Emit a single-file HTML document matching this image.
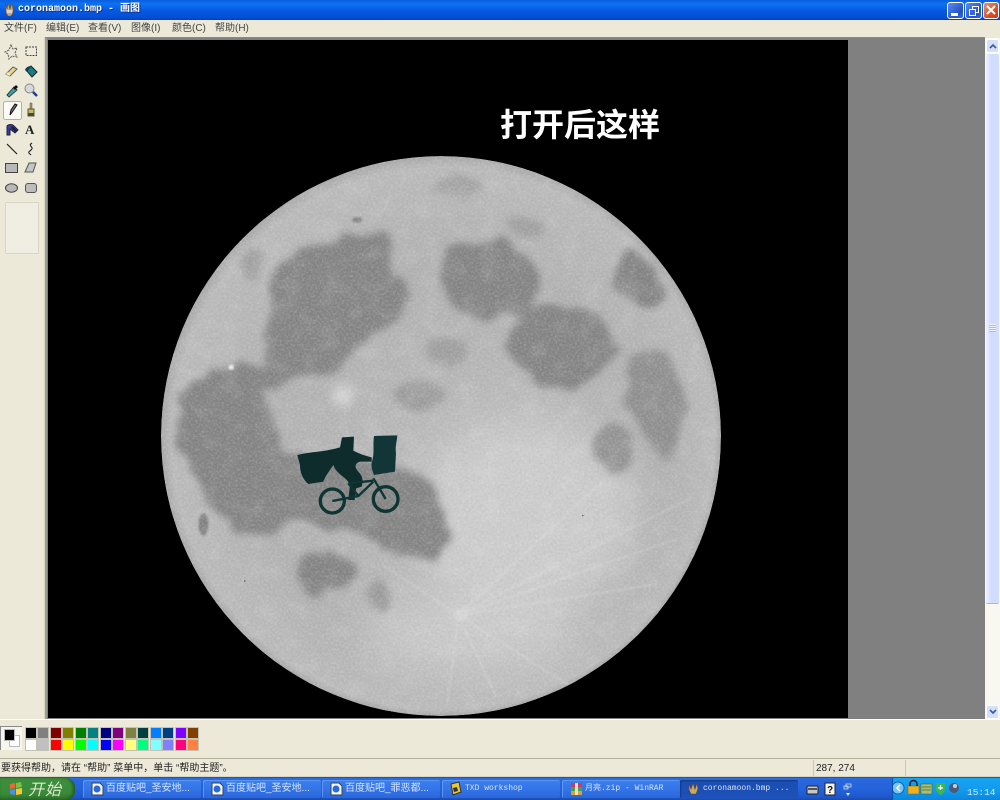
<!DOCTYPE html>
<html lang="zh">
<head>
<meta charset="utf-8">
<title>coronamoon.bmp - 画图</title>
<style>
html,body{margin:0;padding:0;width:1000px;height:800px;overflow:hidden;background:#ece9d8}
body{position:relative;font-family:"Liberation Sans","Noto Sans CJK SC",sans-serif;color:#222}
.a{position:absolute}
#title{left:0;top:0;width:1000px;height:20px;background:linear-gradient(#0a5fe0 0,#0d72f2 20%,#0658e0 55%,#0450d8 85%,#0342b8 100%)}
#title span{position:absolute;left:18px;top:3px;color:#fff;font:bold 10px/14px "Liberation Mono","Noto Sans CJK SC",monospace;white-space:pre;text-shadow:1px 1px 0 #0a2f90}
.wb{position:absolute;top:2px;width:16px;height:15px;border:1px solid #fff;border-radius:3px;background:linear-gradient(135deg,#5c8cf0,#2350c8 70%,#3a6ae0)}
#menu{left:0;top:20px;width:1000px;height:17px;background:#ece9d8}
#menu span{position:absolute;top:2px;font-size:10px;line-height:13px;white-space:nowrap;color:#444}
#tools{left:0;top:37px;width:44px;height:682px;background:#ece9d8;border-right:1px solid #d8d4c0}
#work{left:45px;top:37px;width:940px;height:682px;background:#808080;border-top:1px solid #8a8a8a}
#work:before{content:"";position:absolute;left:0;top:0;width:2px;height:682px;background:#9c9c98}
#canvas{left:48px;top:40px;width:800px;height:678px;background:#000}
#head{left:500px;top:103px;color:#fff;font:bold 32px/40px "Noto Sans CJK SC","Liberation Sans",sans-serif;letter-spacing:0;white-space:nowrap}
#sb{left:985px;top:38px;width:15px;height:681px;background:#f8f7f0}
#thumb{position:absolute;left:1px;top:16px;width:13px;height:549px;background:linear-gradient(90deg,#eef2ff,#cfdcfc 40%,#d2defc);border-radius:2px;border-bottom:1px solid #a8b8dc}
.sbtn{position:absolute;left:1px;width:13px;height:14px;background:#d4e0fa;border-radius:2px;border:1px solid #fff;box-sizing:border-box}
#white{left:0;top:719px;width:1000px;height:1px;background:#fff}
#pal{left:0;top:720px;width:1000px;height:38px;background:#ece9d8}
#pal i{position:absolute;width:10px;height:10px;border:1px solid #c4c2b4;display:block}
#status{left:0;top:758px;width:1000px;height:19px;background:#ece9d8;border-top:1px solid #b5b29e;border-bottom:1px solid #d8d5c4;box-sizing:border-box}
#status span{position:absolute;top:3px;font-size:10px;line-height:13px;white-space:nowrap;color:#222}
#status b{position:absolute;top:1px;width:1px;height:16px;background:#c8c5b2}
#task{left:0;top:777px;width:1000px;height:23px;background:linear-gradient(#2b6fe4 0,#2a66dc 12%,#2463dc 50%,#1f57c8 88%,#1a49a8 100%);border-top:1px solid #1a52c8;box-sizing:border-box}
#start{left:0;top:778px;width:75px;height:22px;background:linear-gradient(#4a9a4a,#3b8f3b 15%,#3a8a3a 70%,#2c702c);border-radius:0 9px 9px 0;box-shadow:inset -2px 0 3px #1f5a1f}
#start span{position:absolute;left:28px;top:0;color:#dfe8d0;font:italic 16px/21px "Noto Sans CJK SC",sans-serif;letter-spacing:1px}
.tb{position:absolute;top:780px;width:118px;height:18px;background:linear-gradient(#3c80ee,#3272e6 60%,#2a66d8);border-radius:2px;color:#d6e4fb;font-size:10px;line-height:17px;white-space:nowrap;box-shadow:inset 1px 1px 0 #5c96f4}
.tb span{position:absolute;left:23px;top:0}
.tb .m{font-family:"Liberation Mono","Noto Sans CJK SC",monospace;font-size:8px}
.tb svg{position:absolute;left:7px;top:1px}
.tb.on{background:linear-gradient(#1a4cb0,#1e52b8);box-shadow:inset 1px 1px 1px #123a88}
#tray{left:892px;top:778px;width:108px;height:22px;background:linear-gradient(#18a4f0,#109aec 60%,#0c86dc);border-left:1px solid #0d50a8;box-sizing:border-box}
</style>
</head>
<body>

<div class="a" id="title">
  <svg class="a" style="left:3px;top:2px" width="13" height="15" viewBox="0 0 13 15"><path d="M2 1l2 6 1-6 2 6 2-6 1 6 1-4-1 8-2 3H5L3 11z" fill="#c9a868" stroke="#6a4a30" stroke-width=".6"/><path d="M4 8h5v3H4z" fill="#d8d0e8"/></svg>
  <span>coronamoon.bmp - 画图</span>
  <div class="wb" style="left:947px;width:15px"><div class="a" style="left:3px;top:10px;width:7px;height:3px;background:#fff"></div></div>
  <div class="wb" style="left:965px;width:15px"><div class="a" style="left:6px;top:3px;width:5px;height:5px;border:1px solid #fff"></div><div class="a" style="left:3px;top:6px;width:5px;height:5px;border:1px solid #fff;background:#3a64d8"></div></div>
  <div class="wb" style="left:983px;width:14px;background:linear-gradient(135deg,#e89070,#d24a24 70%,#c83c18)">
    <svg class="a" style="left:2px;top:2px" width="10" height="10" viewBox="0 0 10 10"><path d="M1 1l8 8M9 1L1 9" stroke="#fff" stroke-width="2"/></svg>
  </div>
</div>

<div class="a" id="menu">
  <span style="left:4px">文件(F)</span>
  <span style="left:46px">编辑(E)</span>
  <span style="left:88px">查看(V)</span>
  <span style="left:131px">图像(I)</span>
  <span style="left:172px">颜色(C)</span>
  <span style="left:215px">帮助(H)</span>
</div>

<div class="a" id="tools">
<svg class="a" style="left:0;top:0" width="44" height="225" viewBox="0 37 44 225">
  <path d="M11 45l2 4 4-1-2 5 2 4-5-1-3 3-1-5-3-2 4-2z" fill="none" stroke="#555" stroke-width="1" stroke-dasharray="2 1"/>
  <rect x="26" y="47" width="10.500" height="8.500" fill="none" stroke="#444" stroke-width="1" stroke-dasharray="2 1"/>
  <path d="M6 74l7-7 4 2-7 7z" fill="#e8d48a" stroke="#666"/><path d="M6 74l4 2v-1l-2-3z" fill="#f6efcf"/>
  <path d="M26 70l5-4 6 6-5 5z" fill="#1c7c7c" stroke="#123"/><path d="M25 70c1-3 4-4 6-4l-4 6z" fill="#123c50"/>
  <path d="M7 95l7-8 3 3-8 7z" fill="#4aa0a8" stroke="#244"/><path d="M13 88l3-3 2 2-3 3z" fill="#111"/>
  <circle cx="29.500" cy="88.500" r="4.500" fill="#d6d8dc" stroke="#888"/><path d="M33 92l4 4" stroke="#223a90" stroke-width="2.500"/>
  <rect x="3.500" y="101.500" width="18" height="18" rx="2" fill="#fbfaf5" stroke="#b4b2a4"/>
  <path d="M10 115l1-5 4-6 2 1-4 6z" fill="#777" stroke="#111"/>
  <path d="M30 103h2v6h-2z" fill="#a89a50" stroke="#555" stroke-width=".5"/><path d="M28 109h6v7h-6z" fill="#c9b860" stroke="#554"/><path d="M28 113h6v3h-6z" fill="#4a4a30"/>
  <path d="M7 126c2-2 5-2 7 0l4 4-3 3-5-4v6H7z" fill="#3a3aa0" stroke="#223"/><path d="M12 126l5 4-2 2-4-4z" fill="#1c1c50"/>
  <text x="25" y="134" font-family="Liberation Serif,serif" font-weight="bold" font-size="13" fill="#222">A</text>
  <path d="M7 144l10 10" stroke="#222" stroke-width="1.200"/>
  <path d="M32 143c-5 3 3 4-1 7s-2 3 0 5" fill="none" stroke="#222" stroke-width="1.100"/>
  <rect x="5.500" y="163.500" width="12" height="9" fill="#b8b8b8" stroke="#444"/>
  <path d="M29 163h7l-3 9h-8z" fill="#c4c4c4" stroke="#555"/>
  <ellipse cx="11.500" cy="188" rx="6" ry="4.200" fill="#b8b8b8" stroke="#444"/>
  <rect x="25.500" y="183.500" width="11" height="9" rx="2.500" fill="#bcbcbc" stroke="#555"/>
  <rect x="5.500" y="202.500" width="33" height="51" fill="#f0eee2" stroke="#d8d5c4"/>
</svg>
</div>

<div class="a" id="work"></div>
<div class="a" id="canvas"></div>

<svg class="a" style="left:48px;top:40px" width="800" height="678" viewBox="48 40 800 678">
  <defs>
    <clipPath id="mc"><circle cx="441" cy="436" r="280"/></clipPath>
    <radialGradient id="base" cx="441" cy="436" r="280" gradientUnits="userSpaceOnUse" fx="500" fy="520">
      <stop offset="0" stop-color="#bcbcbc"/>
      <stop offset=".7" stop-color="#b0b0b0"/>
      <stop offset=".97" stop-color="#bababa"/>
      <stop offset="1" stop-color="#a8a8a8"/>
    </radialGradient>
    <filter id="mare" x="-10%" y="-10%" width="120%" height="120%">
      <feTurbulence type="fractalNoise" baseFrequency=".012" numOctaves="4" seed="5" result="t"/>
      <feDisplacementMap in="SourceGraphic" in2="t" scale="60" xChannelSelector="R" yChannelSelector="G"/>
      <feGaussianBlur stdDeviation="10"/>
    </filter>
    <filter id="bl" x="-30%" y="-30%" width="160%" height="160%"><feGaussianBlur stdDeviation="14"/></filter>
    <filter id="bl2" x="-40%" y="-40%" width="180%" height="180%"><feGaussianBlur stdDeviation="60"/></filter>
    <filter id="ray" x="-10%" y="-10%" width="120%" height="120%"><feGaussianBlur stdDeviation="3"/></filter>
    <filter id="noise" x="0" y="0" width="100%" height="100%">
      <feTurbulence type="fractalNoise" baseFrequency=".45" numOctaves="3" seed="7"/>
      <feColorMatrix values="0 0 0 0 1  0 0 0 0 1  0 0 0 0 1  1.800 0 0 0 -.72"/>
    </filter>
    <filter id="noise2" x="0" y="0" width="100%" height="100%">
      <feTurbulence type="fractalNoise" baseFrequency=".35" numOctaves="3" seed="21"/>
      <feColorMatrix values="0 0 0 0 .35  0 0 0 0 .35  0 0 0 0 .35  0 1.800 0 0 -.76"/>
    </filter>
    <filter id="noise3" x="0" y="0" width="100%" height="100%">
      <feTurbulence type="fractalNoise" baseFrequency=".05" numOctaves="3" seed="11"/>
      <feColorMatrix values="0 0 0 0 .9  0 0 0 0 .9  0 0 0 0 .9  2.500 0 0 0 -1.150"/>
    </filter>
  </defs>
  <g clip-path="url(#mc)">
    <circle cx="441" cy="436" r="280" fill="url(#base)"/>
    <g transform="translate(150 140) scale(.3763)">
      <g filter="url(#bl2)" fill="#d0d0d0" opacity=".8">
        <ellipse cx="1000" cy="1000" rx="300" ry="260"/>
        <ellipse cx="850" cy="1320" rx="300" ry="110"/>
      </g>
      <g filter="url(#mare)" fill="#828282">
        <path d="M340 340C400 280 520 230 620 260C650 300 640 360 680 380C700 440 660 480 620 510C560 540 520 590 480 620C420 640 380 640 330 660C290 660 280 590 300 540C300 470 320 400 340 340Z"/>
        <path d="M780 290C830 260 920 250 970 290C1020 330 1040 380 1030 430C1000 470 1000 470 990 480C920 480 840 470 810 450C790 420 770 360 780 290Z"/>
        <path d="M960 500C1020 450 1100 420 1180 450C1240 490 1250 540 1240 590C1200 620 1180 610 1160 640C1120 660 1050 670 1020 640C980 600 950 550 960 500Z"/>
        <ellipse cx="1300" cy="380" rx="55" ry="80" transform="rotate(-28 1300 380)"/>
        <path d="M1270 590C1310 540 1370 550 1410 610C1430 690 1410 760 1400 850C1370 870 1350 830 1330 800C1280 740 1250 650 1270 590Z" fill="#8e8e8e"/>
        <ellipse cx="1235" cy="815" rx="48" ry="58" fill="#929292"/>
        <path d="M70 700C100 620 180 590 290 590C330 680 320 770 340 830C400 840 500 830 600 860C700 870 770 900 790 1000C810 1080 760 1130 690 1120C620 1090 560 1030 480 1020C400 1010 320 1040 250 1060C170 1000 120 900 80 820Z"/>
        <ellipse cx="460" cy="1150" rx="72" ry="62"/>
        <ellipse cx="610" cy="1200" rx="35" ry="38" fill="#9a9a9a"/>
        <ellipse cx="720" cy="680" rx="80" ry="45" fill="#9a9a9a"/>
        <ellipse cx="790" cy="560" rx="60" ry="35" fill="#9e9e9e"/>
        <ellipse cx="820" cy="130" rx="70" ry="24" fill="#a0a0a0"/>
        <ellipse cx="990" cy="235" rx="45" ry="26" fill="#a0a0a0"/>
        <ellipse cx="270" cy="325" rx="30" ry="40" fill="#a0a0a0"/>
      </g>
      <ellipse cx="142" cy="1022" rx="13" ry="30" fill="#808080" filter="url(#ray)"/>
      <ellipse cx="550" cy="212" rx="14" ry="8" fill="#848484" filter="url(#ray)"/>
      <g filter="url(#ray)" stroke="#e6e6e6" fill="none" opacity=".3">
        <path d="M820 1262L1440 950M820 1262L1210 900M820 1262L620 1130M820 1262L790 1500M820 1262L920 1480M820 1262L1130 1460M820 1262L1350 1180M820 1262L1400 1060" stroke-width="5"/>
      </g>
      <ellipse cx="825" cy="1262" rx="20" ry="16" fill="#d4d4d4" filter="url(#ray)"/>
      <circle cx="216" cy="604" r="7" fill="#f2f2f2" filter="url(#ray)"/>
      <circle cx="510" cy="680" r="26" fill="#d6d6d6" filter="url(#bl)"/>
      <circle cx="1150" cy="998" r="2" fill="#333"/>
      <circle cx="252" cy="1172" r="2" fill="#333"/>
    </g>
    <rect x="160" y="155" width="562" height="562" filter="url(#noise3)" opacity=".12"/>
    <rect x="160" y="155" width="562" height="562" filter="url(#noise2)" opacity=".2"/>
    <rect x="160" y="155" width="562" height="562" filter="url(#noise)" opacity=".25"/>
  </g>

  <!-- rider -->
  <g transform="translate(280 420) scale(.3333)" fill="#0e2c2c">
    <path d="M52 105C90 95 140 95 180 82L186 52L222 50L220 92C235 100 255 108 275 112L275 125L240 125C225 130 222 140 235 155C250 170 250 185 245 200L228 205L224 240L205 240L210 195C200 170 170 165 160 135C150 150 135 170 130 185L85 192C70 180 60 160 60 135Z"/>
    <path d="M282 48L352 46C350 70 345 80 348 100L345 155L282 165C276 150 272 135 276 125C284 100 278 80 282 48Z" fill="#123638"/>
    <g fill="none" stroke="#0e3434">
      <circle cx="157" cy="243" r="36" stroke-width="10"/>
      <circle cx="317" cy="237" r="37" stroke-width="10"/>
      <path d="M157 243L235 228L280 185M205 190L235 228M205 190L280 182M280 175L317 237" stroke-width="7"/>
    </g>
  </g>
</svg>

<div class="a" id="head">打开后这样</div>

<div class="a" id="sb">
  <div class="sbtn" style="top:1px"><svg class="a" style="left:2px;top:3px" width="8" height="6" viewBox="0 0 8 6"><path d="M1 5l3-3 3 3" fill="none" stroke="#3a5a98" stroke-width="1.600"/></svg></div>
  <div id="thumb"><div class="a" style="left:3px;top:270px;width:7px;height:8px;background:repeating-linear-gradient(#eef3ff 0 1px,#a8bce8 1px 2px)"></div></div>
  <div class="sbtn" style="top:667px"><svg class="a" style="left:2px;top:3px" width="8" height="6" viewBox="0 0 8 6"><path d="M1 1l3 3 3-3" fill="none" stroke="#3a5a98" stroke-width="1.600"/></svg></div>
</div>

<div class="a" id="white"></div>

<div class="a" id="pal">
  <div class="a" style="left:0;top:6px;width:22px;height:24px;background:#f6f5ee;border-top:1px solid #888;border-left:1px solid #888;box-sizing:border-box"></div>
  <div class="a" style="left:9px;top:15px;width:9px;height:10px;background:#fff;border:1px solid #bbb"></div>
  <div class="a" style="left:4px;top:9px;width:9px;height:10px;background:#000;border:1px solid #bbb"></div>
  <i style="left:25px;top:7px;background:#000"></i><i style="left:37px;top:7px;background:#808080"></i><i style="left:50px;top:7px;background:#800000"></i><i style="left:62px;top:7px;background:#808000"></i><i style="left:75px;top:7px;background:#008000"></i><i style="left:87px;top:7px;background:#008080"></i><i style="left:100px;top:7px;background:#000080"></i><i style="left:112px;top:7px;background:#800080"></i><i style="left:125px;top:7px;background:#808040"></i><i style="left:137px;top:7px;background:#004040"></i><i style="left:150px;top:7px;background:#0080ff"></i><i style="left:162px;top:7px;background:#004080"></i><i style="left:175px;top:7px;background:#8000ff"></i><i style="left:187px;top:7px;background:#804000"></i>
  <i style="left:25px;top:19px;background:#fff"></i><i style="left:37px;top:19px;background:#c0c0c0"></i><i style="left:50px;top:19px;background:#f00"></i><i style="left:62px;top:19px;background:#ff0"></i><i style="left:75px;top:19px;background:#0f0"></i><i style="left:87px;top:19px;background:#0ff"></i><i style="left:100px;top:19px;background:#00f"></i><i style="left:112px;top:19px;background:#f0f"></i><i style="left:125px;top:19px;background:#ffff80"></i><i style="left:137px;top:19px;background:#00ff80"></i><i style="left:150px;top:19px;background:#80ffff"></i><i style="left:162px;top:19px;background:#8080ff"></i><i style="left:175px;top:19px;background:#ff0080"></i><i style="left:187px;top:19px;background:#ff8040"></i>
</div>

<div class="a" id="status">
  <span style="left:1px">要获得帮助，请在 “帮助” 菜单中，单击 “帮助主题”。</span>
  <b style="left:813px"></b><b style="left:905px"></b>
  <span style="left:816px">287, 274</span>
</div>

<div class="a" id="task"></div>

<div class="a" id="start">
  <svg class="a" style="left:8px;top:3px" width="16" height="16" viewBox="0 0 16 16"><path d="M2 3l5-1v5l-5 1z" fill="#e8683c"/><path d="M8 2l5-1 1 5-6 1z" fill="#7cc040"/><path d="M2 9l5-1v6l-5-1z" fill="#4a90e8"/><path d="M8 8l6-1v6l-6 1z" fill="#f4c830"/></svg>
  <span>开始</span>
</div>

<div class="tb" style="left:83px"><svg width="14" height="15" viewBox="0 0 14 15"><path d="M2 2h8l3 3v9H2z" fill="#f4f4f4" stroke="#345"/><circle cx="7" cy="8" r="3.500" fill="#2a6ad8"/></svg><span>百度贴吧_圣安地...</span></div>
<div class="tb" style="left:203px"><svg width="14" height="15" viewBox="0 0 14 15"><path d="M2 2h8l3 3v9H2z" fill="#f4f4f4" stroke="#345"/><circle cx="7" cy="8" r="3.500" fill="#2a6ad8"/></svg><span>百度贴吧_圣安地...</span></div>
<div class="tb" style="left:322px"><svg width="14" height="15" viewBox="0 0 14 15"><path d="M2 2h8l3 3v9H2z" fill="#f4f4f4" stroke="#345"/><circle cx="7" cy="8" r="3.500" fill="#2a6ad8"/></svg><span>百度贴吧_罪恶都...</span></div>
<div class="tb" style="left:442px"><svg width="14" height="15" viewBox="0 0 14 15"><path d="M2 3l8-2 2 10-8 3z" fill="#e8c838" stroke="#333"/><path d="M4 7l4-1 1 4-4 1z" fill="#333"/></svg><span class="m">TXD workshop</span></div>
<div class="tb" style="left:562px"><svg width="14" height="15" viewBox="0 0 14 15"><rect x="2" y="2" width="11" height="4" fill="#c83a6a"/><rect x="2" y="6" width="11" height="4" fill="#4aa04a"/><rect x="2" y="10" width="11" height="4" fill="#d8a038"/><rect x="6" y="2" width="3" height="12" fill="#e8e0c8"/></svg><span class="m">月亮.zip - WinRAR</span></div>
<div class="tb on" style="left:680px"><svg width="14" height="15" viewBox="0 0 14 15"><path d="M2 2l2 6 2-6 2 6 2-6 1 6-2 5H4L2 9z" fill="#c9a868" stroke="#5a4030" stroke-width=".6"/></svg><span class="m">coronamoon.bmp ...</span></div>

<svg class="a" style="left:805px;top:779px" width="50" height="20" viewBox="0 0 50 20">
  <rect x="2" y="7" width="11" height="8" rx="1" fill="#c8c8c8" stroke="#222"/><rect x="3" y="9" width="9" height="2" fill="#555"/>
  <rect x="20" y="4" width="10" height="12" fill="#f4f4f4" stroke="#222"/>
  <text x="22" y="14" font-family="Liberation Sans,sans-serif" font-weight="bold" font-size="10" fill="#111">?</text>
  <path d="M41 5h5v3h-5zM39 7h4v3h-4z" fill="none" stroke="#cfe0f8" stroke-width=".8"/>
  <path d="M41 14h4l-2 3z" fill="#e8f0ff"/>
</svg>

<div class="a" id="tray">
  <svg class="a" style="left:0;top:0" width="108" height="22" viewBox="892 778 108 22">
    <circle cx="897" cy="788" r="6" fill="#7cc4f4" stroke="#0c60c0"/><path d="M899 785l-3 3 3 3" fill="none" stroke="#fff" stroke-width="1.500"/>
    <rect x="907" y="786" width="11" height="8" fill="#f0b020" stroke="#8a6010" stroke-width=".5"/><path d="M909 786v-2a3.500 3.500 0 0 1 7 0v2" fill="none" stroke="#222" stroke-width="1.500"/>
    <rect x="920" y="784" width="11" height="10" fill="#a8c070" stroke="#506030" stroke-width=".6"/><path d="M921 787h9M921 790h9" stroke="#506030" stroke-width=".7"/>
    <path d="M935 783h9v6c0 3-3 5-4.500 6-1.500-1-4.500-3-4.500-6z" fill="#3cb850"/><path d="M939.500 785v5M937 788h5" stroke="#fff" stroke-width="1.200"/>
    <circle cx="953" cy="788" r="5" fill="#4a5a78"/><circle cx="954" cy="786" r="2" fill="#c8d0e0"/>
    <text x="966" y="795" font-family="Liberation Mono,monospace" font-size="9.500" fill="#d8ecfa">15:14</text>
  </svg>
</div>

</body>
</html>
